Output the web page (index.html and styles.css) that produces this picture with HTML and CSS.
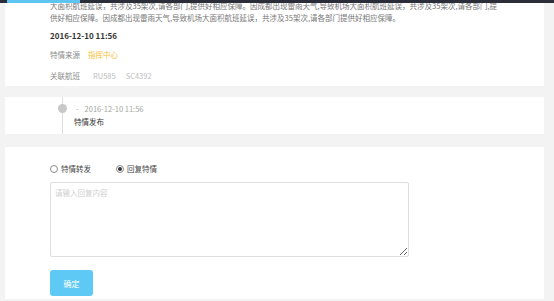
FILE: index.html
```
<!DOCTYPE html>
<html lang="zh-CN">
<head>
<meta charset="utf-8">
<title>特情详情</title>
<link rel="stylesheet" href="styles.css">
</head>
<body>
<div class="topbar"><div class="topbar-active"></div></div>
<div class="page">
  <section class="card card-info">
    <p class="desc">大面积航班延误，共涉及35架次,请各部门,提供好相应保障。因成都出现雷雨天气,导致机场大面积航班延误，共涉及35架次,请各部门,提供好相应保障。因成都出现雷雨天气,导致机场大面积航班延误，共涉及35架次,请各部门提供好相应保障。</p>
    <div class="date">2016-12-10 11:56</div>
    <div class="row row-source"><span class="label">特情来源</span><span class="source">指挥中心</span></div>
    <div class="row row-flights"><span class="label">关联航班</span><span class="flight">RU585</span><span class="flight">SC4392</span></div>
  </section>

  <section class="card card-timeline">
    <div class="timeline">
      <span class="dot"></span>
      <div class="tl-time"><span class="dash">-</span>2016-12-10 11:56</div>
      <div class="tl-title">特情发布</div>
    </div>
  </section>

  <section class="card card-reply">
    <div class="radios">
      <label class="radio"><span class="radio-box"></span>特情转发</label>
      <label class="radio radio-checked"><span class="radio-box"></span>回复特情</label>
    </div>
    <textarea class="reply-input" placeholder="请输入回复内容"></textarea>
    <button class="btn-ok" type="button">确定</button>
  </section>
</div>
</body>
</html>
```
FILE: styles.css
```
* { box-sizing: border-box; }
html, body { margin: 0; padding: 0; }
body {
  background: #f3f3f3;
  font-family: "Noto Sans CJK SC", "Noto Sans", sans-serif;
  font-size: 7.5px;
  color: #333;
  height: 301px;
  overflow: hidden;
}
.topbar {
  position: fixed;
  top: 0; left: 0; right: 0;
  height: 3px;
  background: #2b2d39;
  display: flex;
  z-index: 5;
}
.topbar-active {
  margin-left: 7px;
  width: 73px;
  height: 3px;
  background: #5ec4f2;
}
.page {
  padding: 0 10px 0 5px;
}
.card {
  background: #fff;
}
.card-info {
  padding: 0 44px 4px 45px;
}
.desc {
  margin: 0;
  line-height: 12px;
  color: #777;
}
.date {
  margin-top: 6px;
  line-height: 12px;
  font-weight: bold;
  color: #333;
  font-size: 8px;
}
.row {
  line-height: 12px;
  display: flex;
}
.row-source { margin-top: 7px; gap: 8px; }
.row-flights { margin-top: 9px; gap: 10px; }
.label { color: #8a8a8a; }
.source { color: #f6c13a; }
.flight { color: #bdbdbd; }
.row-flights .label { margin-right: 3px; }

.card-timeline {
  margin-top: 11px;
}
.timeline {
  position: relative;
  margin-left: 57px;
  border-left: 1px solid #dcdcdc;
  padding: 6px 0 6px 11px;
}
.dot {
  position: absolute;
  left: -5px;
  top: 7px;
  width: 9px;
  height: 9px;
  border-radius: 50%;
  background: #c8c8c8;
}
.tl-time {
  line-height: 12px;
  color: #a5a5a5;
}
.dash {
  margin-left: 2px;
  margin-right: 6px;
}
.tl-title {
  line-height: 13px;
  color: #333;
}

.card-reply {
  margin-top: 13px;
  padding: 16px 0 3px 45px;
}
.radios {
  display: flex;
  gap: 25px;
  line-height: 12px;
  color: #444;
}
.radio {
  display: flex;
  align-items: center;
  gap: 3px;
}
.radio-box {
  width: 8px;
  height: 8px;
  border: 1px solid #8a8a8a;
  border-radius: 50%;
  display: flex;
  align-items: center;
  justify-content: center;
}
.radio-checked .radio-box::after {
  content: "";
  width: 4px;
  height: 4px;
  border-radius: 50%;
  background: #333;
}
.reply-input {
  display: block;
  margin-top: 7px;
  width: 359px;
  height: 75px;
  border: 1px solid #dedede;
  border-radius: 2px;
  padding: 4px;
  font-family: inherit;
  font-size: 7.5px;
  line-height: 12px;
  resize: both;
  outline: none;
}
.reply-input::placeholder { color: #cfcfcf; }
.btn-ok {
  display: block;
  margin-top: 13px;
  width: 43px;
  height: 26px;
  border: 0;
  border-radius: 3px;
  background: #5fc9f6;
  color: #fff;
  font-family: inherit;
  font-size: 8px;
  padding: 0;
}
```
